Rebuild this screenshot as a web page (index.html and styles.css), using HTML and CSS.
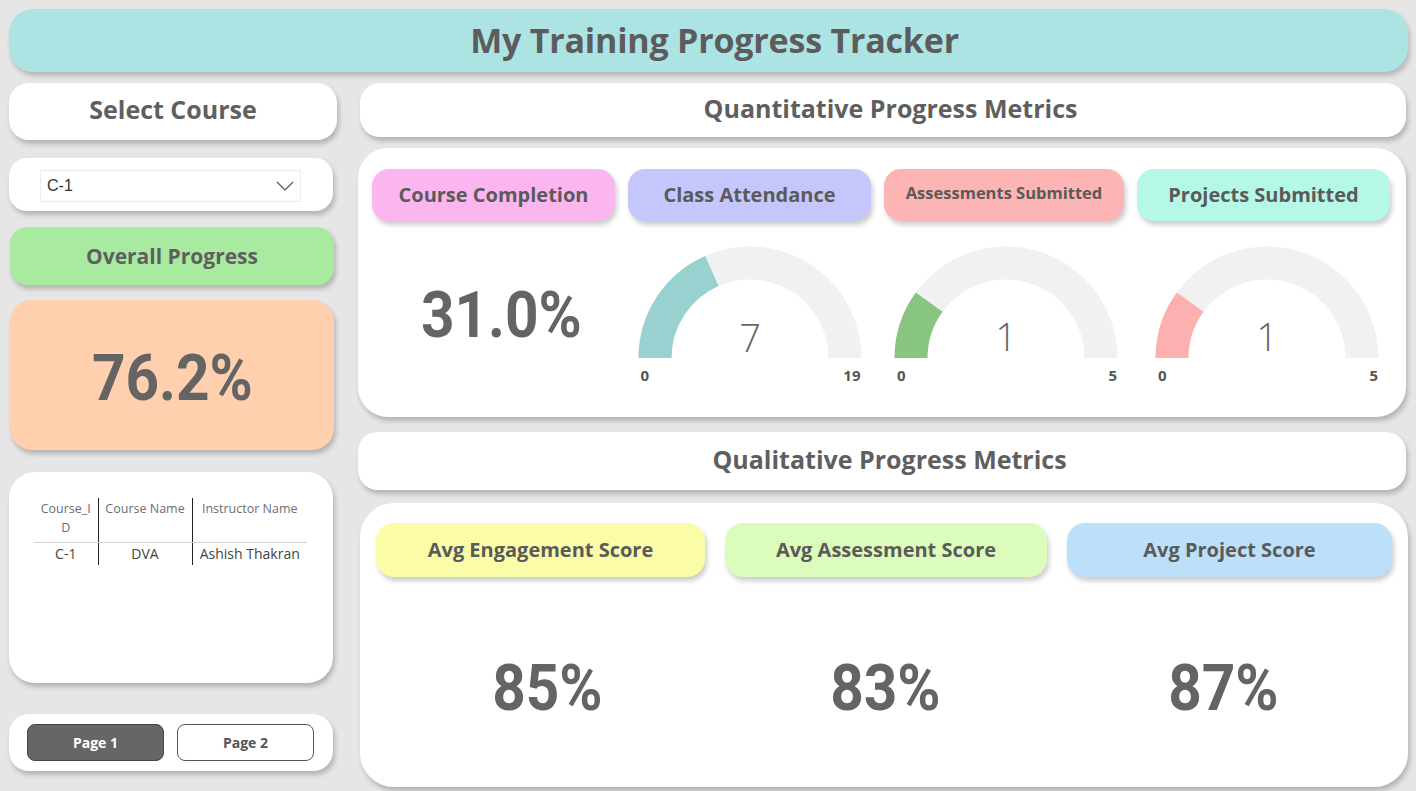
FILE: index.html
```html
<!DOCTYPE html>
<html lang="en">
<head>
<meta charset="utf-8">
<title>My Training Progress Tracker</title>
<link rel="stylesheet" href="styles.css">
</head>
<body>
<div class="page">
  <header class="title-bar"><h1>My Training Progress Tracker</h1></header>
  <div class="main">
    <aside class="left">
      <div class="card select-title">Select Course</div>
      <div class="card dropdown-card">
        <div class="select-box">
          <span class="select-value">C-1</span>
          <svg class="chevron" width="18" height="10" viewBox="0 0 18 10"><path d="M1 1 L9 9 L17 1" fill="none" stroke="#555" stroke-width="1.2"/></svg>
        </div>
      </div>
      <div class="overall-title">Overall Progress</div>
      <div class="overall-value"><span class="big">76.2%</span></div>
      <div class="card table-card">
        <table class="course-table">
          <thead>
            <tr><th class="c1">Course_ID</th><th class="c2">Course Name</th><th class="c3">Instructor Name</th></tr>
          </thead>
          <tbody>
            <tr><td class="c1">C-1</td><td class="c2">DVA</td><td class="c3">Ashish Thakran</td></tr>
          </tbody>
        </table>
      </div>
      <div class="card nav-card">
        <button class="nav-btn active">Page 1</button>
        <button class="nav-btn">Page 2</button>
      </div>
    </aside>
    <section class="right">
      <div class="card section-title quant-title">Quantitative Progress Metrics</div>
      <div class="card quant">
        <div class="quant-grid">
          <div class="pill pink">Course Completion</div>
          <div class="pill lavender">Class Attendance</div>
          <div class="pill salmon small">Assessments Submitted</div>
          <div class="pill mint">Projects Submitted</div>
        </div>
        <div class="quant-values">
          <div class="value-cell"><span class="big">31.0%</span></div>
          <div class="value-cell">
            <svg class="gauge" width="224" height="112" viewBox="0 0 224 112">
              <path d="M 17 111 A 95 95 0 0 1 207 111" fill="none" stroke="#f1f1f1" stroke-width="33"/>
              <path d="M 17 111 A 95 95 0 0 1 73.85 24.0" fill="none" stroke="#99d0d0" stroke-width="33"/>
              <text x="112" y="105" class="gauge-num" text-anchor="middle">7</text>
            </svg>
            <div class="gauge-labels"><span>0</span><span>19</span></div>
          </div>
          <div class="value-cell">
            <svg class="gauge" width="224" height="112" viewBox="0 0 224 112">
              <path d="M 17 111 A 95 95 0 0 1 207 111" fill="none" stroke="#f1f1f1" stroke-width="33"/>
              <path d="M 17 111 A 95 95 0 0 1 35.14 55.16" fill="none" stroke="#88c580" stroke-width="33"/>
              <text x="112" y="104" class="gauge-num" text-anchor="middle">1</text>
            </svg>
            <div class="gauge-labels"><span>0</span><span>5</span></div>
          </div>
          <div class="value-cell">
            <svg class="gauge" width="224" height="112" viewBox="0 0 224 112">
              <path d="M 17 111 A 95 95 0 0 1 207 111" fill="none" stroke="#f1f1f1" stroke-width="33"/>
              <path d="M 17 111 A 95 95 0 0 1 35.14 55.16" fill="none" stroke="#fdb0b0" stroke-width="33"/>
              <text x="112" y="104" class="gauge-num" text-anchor="middle">1</text>
            </svg>
            <div class="gauge-labels"><span>0</span><span>5</span></div>
          </div>
        </div>
      </div>
      <div class="card section-title qual-title">Qualitative Progress Metrics</div>
      <div class="card qual">
        <div class="qual-grid">
          <div class="pill yellow">Avg Engagement Score</div>
          <div class="pill lightgreen">Avg Assessment Score</div>
          <div class="pill lightblue">Avg Project Score</div>
        </div>
        <div class="qual-values">
          <div class="value-cell"><span class="big">85%</span></div>
          <div class="value-cell"><span class="big">83%</span></div>
          <div class="value-cell"><span class="big">87%</span></div>
        </div>
      </div>
    </section>
  </div>
</div>
</body>
</html>
```
FILE: styles.css
```css
* { box-sizing: border-box; }

body {
  margin: 0;
  width: 1416px;
  height: 791px;
  overflow: hidden;
  background: #e6e6e6;
  font-family: "Open Sans", "Noto Sans", sans-serif;
  color: #5f5f5f;
}

.page {
  padding: 9px 8px 0 9px;
}

.card {
  background: #ffffff;
  box-shadow: 2px 4px 5px rgba(0, 0, 0, 0.22);
}

.title-bar {
  height: 63px;
  background: #ace4e4;
  border-radius: 24px;
  box-shadow: 2px 4px 5px rgba(0, 0, 0, 0.2);
  display: flex;
  align-items: center;
  justify-content: center;
}

.title-bar h1 {
  margin: 0 0 2px 12px;
  font-size: 34px;
  font-weight: 700;
  color: #5c5c5c;
  letter-spacing: -0.2px;
}

.main {
  display: flex;
  margin-top: 11px;
}

/* ---------- left column ---------- */
.left {
  width: 328px;
  display: flex;
  flex-direction: column;
}

.select-title {
  height: 57px;
  border-radius: 20px;
  display: flex;
  align-items: center;
  justify-content: center;
  font-size: 25px;
  font-weight: 700;
  padding-bottom: 5px;
}

.dropdown-card {
  margin-top: 18px;
  width: 324px;
  height: 53px;
  border-radius: 18px;
  padding: 12px 32px 0 31px;
}

.select-box {
  height: 32px;
  border: 1px solid #ececec;
  display: flex;
  align-items: center;
  justify-content: space-between;
  padding: 0 6px 0 6px;
}

.select-value {
  font-family: "Liberation Sans", Arial, sans-serif;
  font-size: 16px;
  color: #333;
}

.chevron { display: block; }

.overall-title {
  margin: 16px 0 0 1px;
  width: 324px;
  height: 58px;
  border-radius: 17px;
  background: #a8eaa0;
  box-shadow: 2px 4px 5px rgba(0, 0, 0, 0.22);
  display: flex;
  align-items: center;
  justify-content: center;
  font-size: 21px;
  font-weight: 700;
  padding-bottom: 1px;
}

.overall-value {
  margin: 15px 0 0 1px;
  width: 324px;
  height: 150px;
  border-radius: 22px;
  background: #ffcfae;
  box-shadow: 2px 4px 5px rgba(0, 0, 0, 0.22);
  display: flex;
  align-items: center;
  justify-content: center;
  padding-top: 6px;
}

.big {
  display: inline-block;
  font-family: Roboto, "Liberation Sans", sans-serif;
  font-weight: 700;
  font-size: 65px;
  line-height: 1;
  color: #646464;
  transform: scaleX(0.9);
}

.table-card {
  margin-top: 22px;
  width: 324px;
  height: 211px;
  border-radius: 26px;
  padding: 26px 0 0 25px;
}

.course-table {
  border-collapse: collapse;
  table-layout: fixed;
  width: 273px;
}

.course-table .c1 { width: 64px; }
.course-table .c2 { width: 94px; border-left: 1px solid #222; border-right: 1px solid #222; }
.course-table .c3 { width: 115px; }

.course-table th {
  font-weight: 400;
  font-size: 12.5px;
  color: #6e6e6e;
  line-height: 19px;
  padding: 1px 3px 5px 3px;
  vertical-align: top;
  text-align: center;
  word-break: break-all;
  border-bottom: 1px solid #d4d4d4;
}

.course-table th.c1 { padding: 1px 4px 5px 4px; }

.course-table td {
  font-size: 14px;
  color: #444;
  text-align: center;
  padding: 1px 2px 1px 2px;
  line-height: 20px;
  white-space: nowrap;
}

.nav-card {
  margin-top: 31px;
  width: 324px;
  height: 57px;
  border-radius: 20px;
  display: flex;
  align-items: center;
  gap: 13px;
  padding: 0 0 1px 18px;
}

.nav-btn {
  width: 137px;
  height: 37px;
  border-radius: 8px;
  border: 1px solid #555;
  background: #fff;
  font-family: "Open Sans", "Noto Sans", sans-serif;
  font-weight: 700;
  font-size: 14px;
  color: #555;
  padding: 0;
}

.nav-btn.active {
  background: #666666;
  border-color: #444;
  color: #fff;
}

/* ---------- right column ---------- */
.right {
  margin-left: 21px;
  width: 1050px;
  display: flex;
  flex-direction: column;
}

.section-title {
  margin: 0 2px 0 2px;
  height: 54px;
  border-radius: 20px;
  display: flex;
  align-items: center;
  justify-content: center;
  font-size: 25px;
  font-weight: 700;
  padding: 0 0 5px 15px;
}

.quant {
  margin: 11px 2px 0 0;
  height: 269px;
  border-radius: 30px;
  padding: 21px 0 0 14px;
}

.quant-grid {
  display: grid;
  grid-template-columns: 243px 243px 240px 253px;
  column-gap: 13px;
}

.pill {
  height: 52px;
  border-radius: 17px;
  box-shadow: 2px 4px 5px rgba(0, 0, 0, 0.2);
  display: flex;
  align-items: center;
  justify-content: center;
  font-size: 20px;
  font-weight: 700;
  color: #5a5a5a;
  padding-bottom: 2px;
}

.pill.small { font-size: 16.5px; padding-bottom: 6px; }

.pink { background: #fbb6ef; }
.lavender { background: #c5c6fb; }
.salmon { background: #fcb4b4; }
.mint { background: #b6f8e8; }
.yellow { background: #fafca8; }
.lightgreen { background: #dcfcbc; }
.lightblue { background: #bde0fa; }

.quant-values {
  display: grid;
  grid-template-columns: 258px 239px 274px 248px;
  margin-top: 26px;
}

.value-cell {
  display: flex;
  flex-direction: column;
  align-items: center;
  justify-content: center;
}

.gauge { display: block; overflow: visible; }

.gauge-num {
  font-family: "Open Sans", "Noto Sans", sans-serif;
  font-weight: 300;
  font-size: 38px;
  fill: #666;
}

.gauge-labels {
  width: 224px;
  display: flex;
  justify-content: space-between;
  padding: 0 1px 0 3px;
  margin-top: 7px;
  font-size: 15px;
  font-weight: 700;
  color: #555;
  line-height: 18px;
}

.qual-title {
  margin-top: 15px;
  height: 58px;
  margin-right: 2px;
  margin-left: 0;
}

.qual {
  margin: 13px 0 0 2px;
  height: 284px;
  border-radius: 34px;
  padding: 20px 16px 0 16px;
  display: flex;
  flex-direction: column;
}

.qual-grid {
  display: grid;
  grid-template-columns: 329px 322px 325px;
  column-gap: 20px;
}

.qual .pill {
  height: 54px;
  border-radius: 18px;
}

.qual-values {
  flex: 1;
  display: grid;
  grid-template-columns: repeat(3, 1fr);
  padding: 12px 0 0 2px;
}
```
